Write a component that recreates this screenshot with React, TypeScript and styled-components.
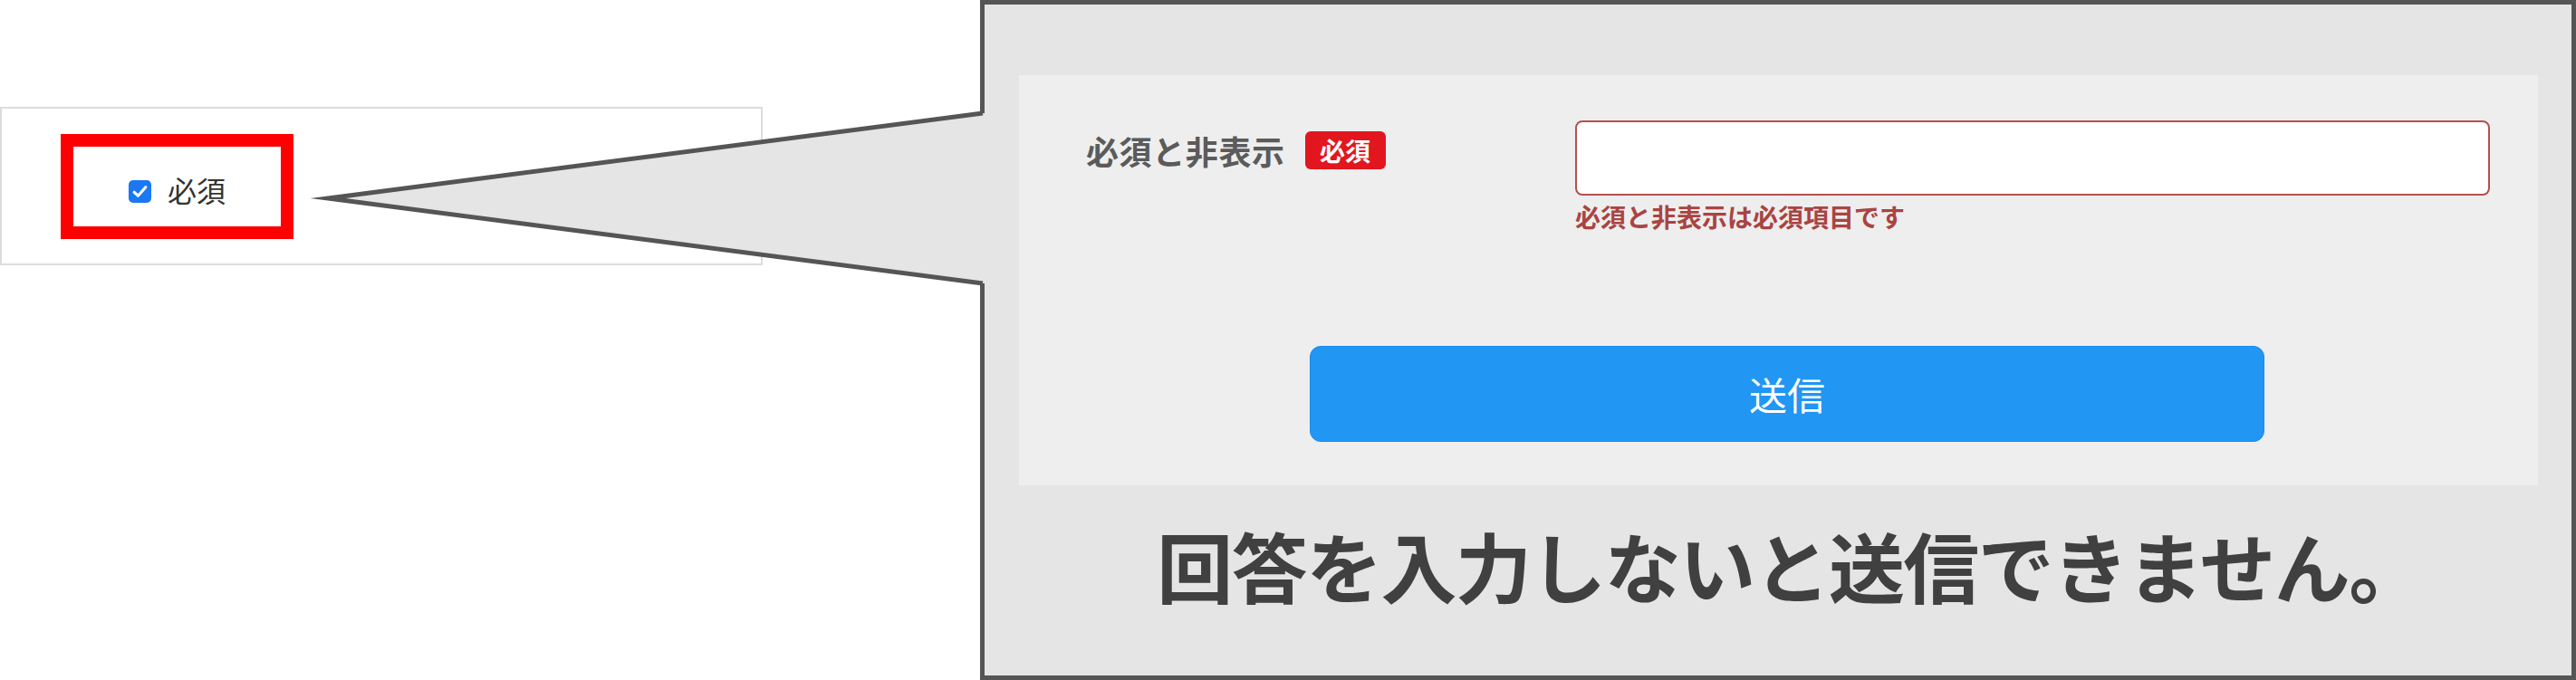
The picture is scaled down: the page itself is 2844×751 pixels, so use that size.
import React from "react";
import styled, { createGlobalStyle } from "styled-components";

const GlobalStyle = createGlobalStyle`
  html, body {
    margin: 0;
    padding: 0;
    background: #ffffff;
  }
  body {
    font-family: "Noto Sans CJK JP", "Noto Sans", sans-serif;
  }
`;

const Page = styled.div`
  display: flex;
  align-items: flex-start;
  width: 2844px;
  height: 751px;
  overflow: hidden;
`;

/* left: the settings screen with the highlighted checkbox */
const Preview = styled.div`
  box-sizing: border-box;
  width: 842px;
  height: 175px;
  margin-top: 118px;
  border: 2px solid #dcdcdc;
  padding: 28px 0 0 65px;
`;

const Highlight = styled.div`
  box-sizing: border-box;
  width: 257px;
  height: 116px;
  border: 14px solid #ff0000;
  display: flex;
  align-items: center;
  gap: 18px;
  padding: 11px 0 0 61px;
`;

const CheckBox = styled.span`
  display: inline-flex;
  align-items: center;
  justify-content: center;
  width: 25px;
  height: 25px;
  border-radius: 5px;
  background: #1b78f2;
`;

const CheckLabel = styled.span`
  font-size: 32px;
  line-height: 1;
  color: #333333;
  margin-bottom: 5px;
`;

/* right: callout showing the form */
const Callout = styled.section`
  position: relative;
  box-sizing: border-box;
  width: 1762px;
  height: 751px;
  margin-left: 240px;
  border: 5px solid #555555;
  background: #e5e5e5;
  padding: 78px 37px 0 38px;
  display: flex;
  flex-direction: column;
`;

const Pointer = styled.svg`
  position: absolute;
  left: -752px;
  top: 105px;
  width: 760px;
  height: 215px;
  z-index: 2;
  overflow: visible;
`;

const Form = styled.div`
  box-sizing: border-box;
  height: 453px;
  background: #eeeeee;
  padding-top: 50px;
  display: flex;
  flex-direction: column;
`;

const FieldRow = styled.div`
  display: flex;
`;

const LabelCol = styled.div`
  box-sizing: border-box;
  width: 614px;
  padding: 12px 0 0 74px;
  display: flex;
  align-items: flex-start;
`;

const LabelText = styled.span`
  display: flex;
  align-items: center;
  height: 42px;
  font-size: 36px;
  font-weight: 700;
  letter-spacing: 0.6px;
  color: #5b5b5b;
  line-height: 1;
`;

const Badge = styled.span`
  display: inline-flex;
  align-items: center;
  justify-content: center;
  box-sizing: border-box;
  width: 89px;
  height: 42px;
  margin-left: 22px;
  border-radius: 6px;
  background: #e2161f;
  color: #ffffff;
  font-size: 28px;
  font-weight: 700;
  line-height: 1;
`;

const FieldCol = styled.div`
  display: flex;
  flex-direction: column;
  width: 1010px;
`;

const TextInput = styled.div`
  box-sizing: border-box;
  height: 83px;
  background: #ffffff;
  border: 2px solid #b5504d;
  border-radius: 8px;
`;

const ErrorText = styled.div`
  margin-top: 9px;
  font-size: 28px;
  font-weight: 700;
  line-height: 1;
  color: #a94442;
`;

const ButtonRow = styled.div`
  padding: 129px 0 0 321px;
`;

const SubmitButton = styled.button`
  box-sizing: border-box;
  width: 1054px;
  height: 106px;
  border: 1px solid #1a8cf1;
  border-radius: 12px;
  background: #2196f3;
  color: #ffffff;
  font-family: inherit;
  font-size: 42px;
  font-weight: 400;
  line-height: 1;
  display: flex;
  align-items: center;
  justify-content: center;
  padding: 0;
`;

const Caption = styled.p`
  margin: 46px 0 0;
  padding-left: 26px;
  text-align: center;
  font-size: 84px;
  font-weight: 700;
  letter-spacing: -1.6px;
  line-height: 1;
  color: #404040;
`;

export default function App() {
  return (
    <>
      <GlobalStyle />
      <Page>
        <Preview>
          <Highlight>
            <CheckBox>
              <svg width="21" height="21" viewBox="0 0 16 16">
                <path
                  d="M3.2 8.6 L6.4 11.6 L12.8 4.4"
                  fill="none"
                  stroke="#ffffff"
                  strokeWidth="2.4"
                  strokeLinecap="round"
                  strokeLinejoin="round"
                />
              </svg>
            </CheckBox>
            <CheckLabel>必須</CheckLabel>
          </Highlight>
        </Preview>

        <Callout>
          <Pointer viewBox="0 0 760 215">
            <polygon points="27,109 749.5,15 756,15 756,203 749.5,203" fill="#e5e5e5" />
            <polyline
              points="750,15 27,109 750,203"
              fill="none"
              stroke="#555555"
              strokeWidth="5"
              strokeMiterlimit="12"
            />
          </Pointer>

          <Form>
            <FieldRow>
              <LabelCol>
                <LabelText>必須と非表示</LabelText>
                <Badge>必須</Badge>
              </LabelCol>
              <FieldCol>
                <TextInput />
                <ErrorText>必須と非表示は必須項目です</ErrorText>
              </FieldCol>
            </FieldRow>
            <ButtonRow>
              <SubmitButton type="button">送信</SubmitButton>
            </ButtonRow>
          </Form>

          <Caption>回答を入力しないと送信できません。</Caption>
        </Callout>
      </Page>
    </>
  );
}
